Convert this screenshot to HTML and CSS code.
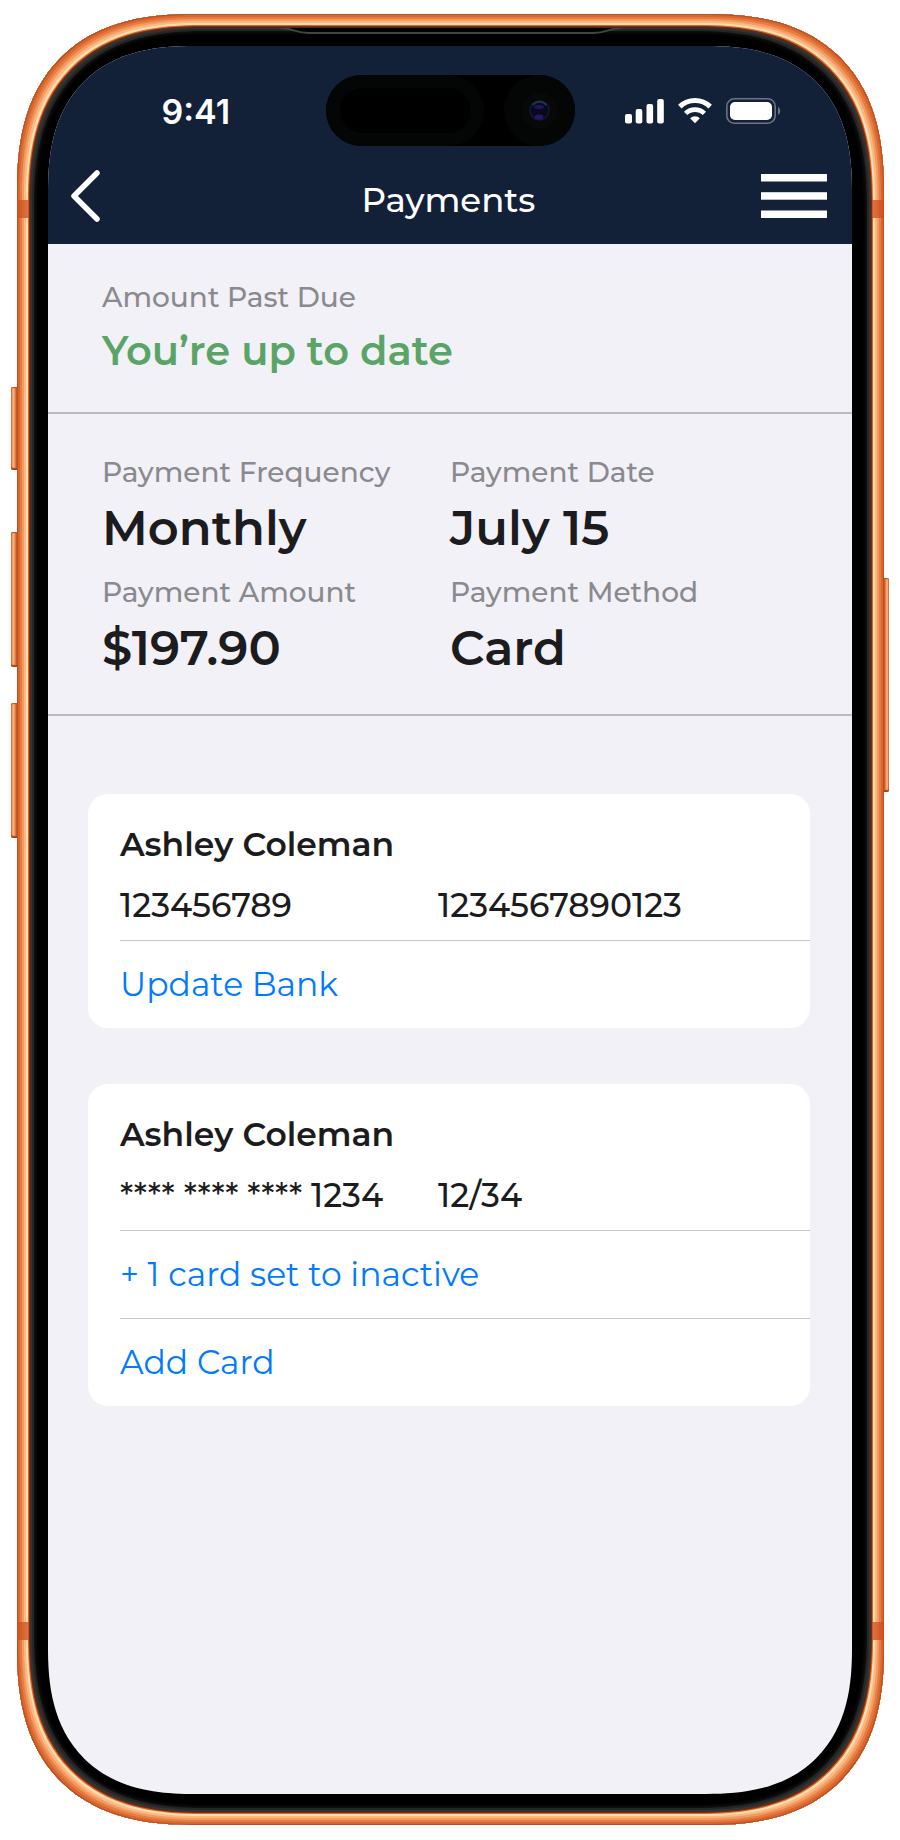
FILE: index.html
```
<!DOCTYPE html>
<html lang="en">
<head>
    <meta charset="UTF-8">
    <meta name="viewport" content="width=device-width, initial-scale=1.0">
    <title>Payments</title>
    <link rel="stylesheet" href="styles.css">
</head>
<body>
    <div class="phone">
        <!-- Side buttons and antenna bands -->
        <span class="side-button action"></span>
        <span class="side-button volume-up"></span>
        <span class="side-button volume-down"></span>
        <span class="side-button power"></span>
        <span class="band band-top"></span>
        <span class="band band-bottom"></span>
        <svg class="speaker" viewBox="0 0 340 7" aria-hidden="true">
            <path d="M0 0H340C328 0 326 5 312 5H28C14 5 12 0 0 0Z" fill="#000"/>
            <path d="M0 0C12 0 14 5 28 5H312C326 5 328 0 340 0" fill="none" stroke="#444" stroke-width="2"/>
        </svg>

        <div class="screen">
            <header class="header">
                <div class="status-bar">
                    <span class="time">9:41</span>
                    <svg class="island" viewBox="0 0 249 71" aria-hidden="true">
                        <rect width="249" height="71" rx="35.5" fill="#000"/>
                        <rect width="158" height="71" rx="35.5" fill="#040605"/>
                        <rect x="14" y="13" width="131" height="45" rx="22.5" fill="#000"/>
                        <circle cx="213.5" cy="35.5" r="35.5" fill="#040605"/>
                        <circle cx="213.5" cy="35.5" r="18" fill="#080808"/>
                        <circle cx="213.5" cy="35.5" r="9.5" fill="#07091c" stroke="#111a34" stroke-width="1.5"/>
                        <path d="M206.500 30A9 9 0 0 1 220.500 30" fill="none" stroke="#1d3350" stroke-width="2"/>
                        <ellipse cx="213" cy="32" rx="5" ry="2" fill="#21145a"/>
                        <ellipse cx="213" cy="42" rx="4.500" ry="2.500" fill="#2a146c"/>
                    </svg>
                    <div class="status-icons">
                        <svg width="39" height="26" viewBox="0 0 39 26" fill="#fff" aria-hidden="true">
                            <rect x="0" y="16" width="7" height="9.5" rx="2"/>
                            <rect x="10.7" y="11" width="6.6" height="14.5" rx="2"/>
                            <rect x="21.5" y="6" width="6.6" height="19.5" rx="2"/>
                            <rect x="32.2" y="1" width="6.6" height="24.5" rx="2"/>
                        </svg>
                        <svg width="34" height="26" viewBox="0 0 34 26" aria-hidden="true">
                            <path d="M1.8 8.6A22 22 0 0 1 32.2 8.6" fill="none" stroke="#fff" stroke-width="5"/>
                            <path d="M7.6 15.4A13.6 13.6 0 0 1 26.4 15.4" fill="none" stroke="#fff" stroke-width="4.6"/>
                            <path d="M17 25.3L12.1 20.2A7 7 0 0 1 21.9 20.2Z" fill="#fff"/>
                        </svg>
                        <svg width="55" height="26" viewBox="0 0 55 26" aria-hidden="true">
                            <rect x="0.8" y="0.8" width="48.4" height="24.4" rx="7.5" fill="none" stroke="#6c7484" stroke-width="1.6"/>
                            <rect x="4" y="4" width="42" height="18" rx="5" fill="#fff"/>
                            <path d="M52 8.8A5 5 0 0 1 52 17.2Z" fill="#6c7484"/>
                        </svg>
                    </div>
                </div>
                <nav class="nav-bar">
                    <button class="icon-btn" aria-label="Back">
                        <svg width="32" height="54" viewBox="0 0 32 54" aria-hidden="true">
                            <path d="M27 4L4 27L27 50" fill="none" stroke="#fff" stroke-width="5.5" stroke-linecap="round" stroke-linejoin="round"/>
                        </svg>
                    </button>
                    <h1>Payments</h1>
                    <button class="icon-btn menu" aria-label="Menu">
                        <svg width="66" height="44" viewBox="0 0 66 44" fill="#fff" aria-hidden="true">
                            <rect width="66" height="7.5"/>
                            <rect y="18.2" width="66" height="7.5"/>
                            <rect y="36.5" width="66" height="7.5"/>
                        </svg>
                    </button>
                </nav>
            </header>

            <main>
                <section class="summary">
                    <p class="label">Amount Past Due</p>
                    <p class="status">You’re up to date</p>
                </section>

                <section class="summary details">
                    <div>
                        <p class="label">Payment Frequency</p>
                        <p class="value">Monthly</p>
                    </div>
                    <div>
                        <p class="label">Payment Date</p>
                        <p class="value">July 15</p>
                    </div>
                    <div>
                        <p class="label">Payment Amount</p>
                        <p class="value">$197.90</p>
                    </div>
                    <div>
                        <p class="label">Payment Method</p>
                        <p class="value">Card</p>
                    </div>
                </section>

                <div class="cards">
                    <section class="card">
                        <div class="account">
                            <h2>Ashley Coleman</h2>
                            <div class="numbers">
                                <span>123456789</span>
                                <span>1234567890123</span>
                            </div>
                        </div>
                        <a class="card-link" href="#">Update Bank</a>
                    </section>

                    <section class="card">
                        <div class="account">
                            <h2>Ashley Coleman</h2>
                            <div class="numbers">
                                <span>**** **** **** 1234</span>
                                <span>12/34</span>
                            </div>
                        </div>
                        <a class="card-link" href="#">+ 1 card set to inactive</a>
                        <a class="card-link" href="#">Add Card</a>
                    </section>
                </div>
            </main>
        </div>
    </div>
</body>
</html>
```
FILE: styles.css
```
* {
    box-sizing: border-box;
}
body {
    margin: 0;
    padding: 14px 16px 15px 17px;
    background-color: #fff;
    color: #1c1c1e;
    font-family: Montserrat, Inter, sans-serif;
}
h1, h2, p {
    margin: 0;
}
/* Phone frame */
.phone {
    position: relative;
    display: flex;
    min-height: calc(100vh - 29px);
    padding: 32px 32px 31px 31px;
    border-radius: 150px;
    background-color: #000;
    box-shadow:
        inset 0 0 0 1px #b9501f,
        inset 0 0 0 3px #d9652f,
        inset 0 0 0 5px #e57d43,
        inset 0 0 0 7px #f29a60,
        inset 0 0 0 9px #fbb982,
        inset 0 0 0 11px #ffdcae,
        inset 0 0 0 12px #d9642a,
        inset 0 0 0 13px #7a2c0c,
        inset 0 0 0 15px #333,
        inset 0 0 0 17px #262626,
        inset 0 0 4px 18px #181818;
}
.side-button {
    position: absolute;
    left: -6px;
    width: 6px;
    border-radius: 2px 0 0 2px;
    background: linear-gradient(to right, #d9652c, #fbb98a 35%, #f0935a 60%, #c4521e);
    box-shadow: inset 0 1px 1px #c4521e, inset 0 -2px 1px #b04412;
}
.action {
    top: 373px;
    height: 83px;
}
.volume-up {
    top: 518px;
    height: 135px;
}
.volume-down {
    top: 689px;
    height: 135px;
}
.power {
    top: 564px;
    right: -5px;
    left: auto;
    width: 5px;
    height: 214px;
    border-radius: 0 2px 2px 0;
    background: linear-gradient(to left, #d9652c, #fbb98a 35%, #f0935a 60%, #c4521e);
}
.band {
    position: absolute;
    left: 0;
    right: 0;
    height: 18px;
    border: solid rgba(205, 80, 28, 0.75);
    border-width: 0 12px;
}
.band-top {
    top: 186px;
}
.band-bottom {
    bottom: 185px;
}
.speaker {
    position: absolute;
    top: 14px;
    left: 50%;
    width: 340px;
    height: 7px;
    transform: translateX(-50%);
}
.screen {
    flex: 1;
    overflow: hidden;
    border-radius: 122px;
    background-color: #f2f1f7;
}
/* Smoother corners where the browser can draw them */
@supports (corner-shape: superellipse(1.3)) {
    .phone {
        border-radius: 178px;
        corner-shape: superellipse(1.3);
    }
    .screen {
        border-radius: 146px;
        corner-shape: superellipse(1.3);
    }
}
/* Header */
.header {
    padding-top: 29px;
    background-color: #132138;
    color: #fff;
}
.status-bar {
    display: grid;
    grid-template-columns: 1fr 249px 1fr;
    align-items: center;
}
.time {
    padding: 2px 0 0 18px;
    text-align: center;
    font-family: Inter, sans-serif;
    font-size: 34px;
    font-weight: 600;
}
.island {
    width: 249px;
    height: 71px;
}
.status-icons {
    display: flex;
    gap: 14px;
    padding-left: 50px;
}
.nav-bar {
    display: grid;
    grid-template-columns: 1fr auto 1fr;
    align-items: center;
    height: 98px;
    padding: 2px 25px 0 22px;
}
.nav-bar h1 {
    padding-top: 8px;
    font-size: 34px;
    font-weight: 500;
}
.icon-btn {
    display: flex;
    padding: 0;
    border: none;
    background: none;
    cursor: pointer;
}
.menu {
    justify-self: end;
}
/* Payment summary */
.summary {
    padding: 33px 54px 37px;
    border-bottom: 2px solid #bcbbc1;
}
.label {
    color: #8a8a8e;
    font-size: 28px;
    font-weight: 500;
    line-height: 40px;
}
.status {
    margin-top: 10px;
    color: #5ba467;
    font-size: 40px;
    font-weight: 600;
    line-height: 48px;
}
.details {
    display: grid;
    grid-template-columns: 1fr 1fr;
    row-gap: 12px;
    padding: 38px 54px 34px;
}
.value {
    margin-top: 4px;
    font-size: 48px;
    font-weight: 600;
    line-height: 64px;
}
/* Account cards */
.cards {
    display: flex;
    flex-direction: column;
    gap: 56px;
    padding: 78px 42px 0 40px;
}
.card {
    padding-left: 32px;
    border-radius: 20px;
    background-color: #fff;
}
.account {
    padding: 20px 0 8px;
}
.account h2 {
    font-size: 33px;
    font-weight: 600;
    line-height: 60px;
}
.numbers {
    display: grid;
    grid-template-columns: 318px 1fr;
    margin-top: 4px;
    font-size: 33px;
    font-weight: 500;
    line-height: 54px;
}
.card-link {
    display: block;
    border-top: 1px solid #c6c6c8;
    color: #007aff;
    font-size: 33px;
    line-height: 87px;
    text-decoration: none;
}
```
